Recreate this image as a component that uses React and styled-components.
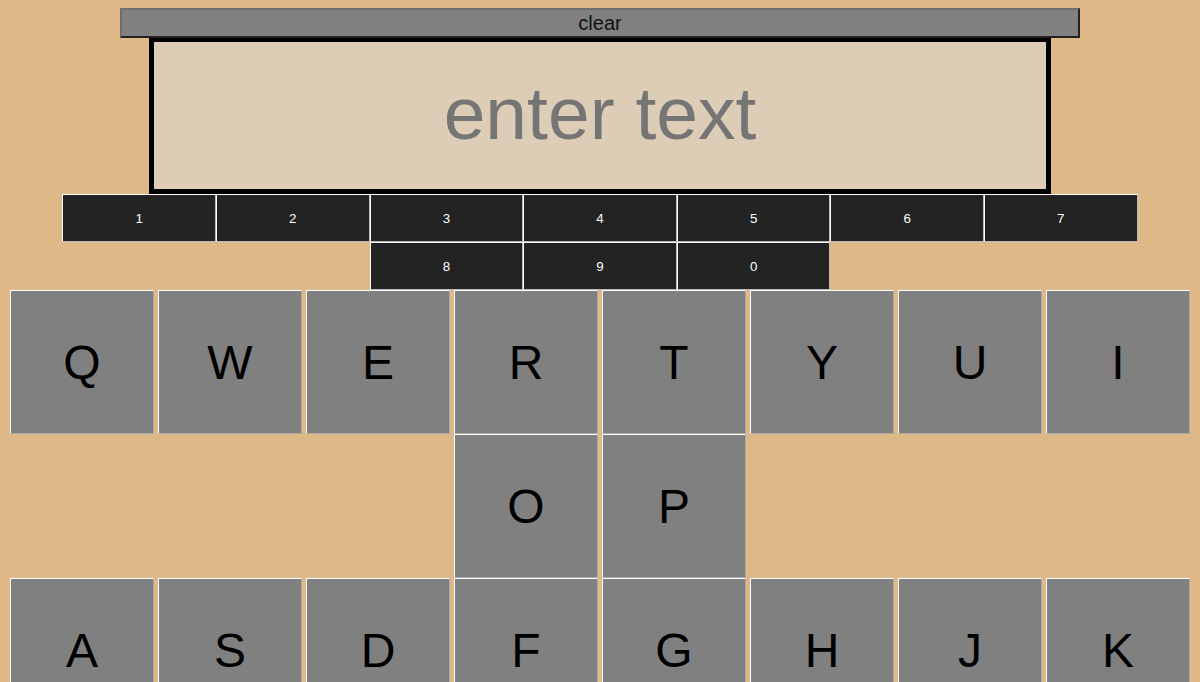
import React, { useState } from 'react'
import styled, { createGlobalStyle } from 'styled-components'

const numbers = ['1', '2', '3', '4', '5', '6', '7', '8', '9', '0']
const letterRows = [
  ['Q', 'W', 'E', 'R', 'T', 'Y', 'U', 'I', 'O', 'P'],
  ['A', 'S', 'D', 'F', 'G', 'H', 'J', 'K', 'L'],
  ['Z', 'X', 'C', 'V', 'B', 'N', 'M'],
]

export default function App() {
  const [text, setText] = useState('')

  return (
    <>
      <GlobalStyle />
      <Page>
        <ClearButton onClick={() => setText('')}>clear</ClearButton>
        <TextBox
          value={text}
          placeholder="enter text"
          onChange={e => setText(e.target.value)}
        />
        <NumberRow>
          {numbers.map(n => (
            <NumberKey key={n} onClick={() => setText(text + n)}>
              {n}
            </NumberKey>
          ))}
        </NumberRow>
        {letterRows.map((row, i) => (
          <LetterRow key={i}>
            {row.map(l => (
              <LetterKey key={l} onClick={() => setText(text + l)}>
                {l}
              </LetterKey>
            ))}
          </LetterRow>
        ))}
      </Page>
    </>
  )
}

const GlobalStyle = createGlobalStyle`
  html, body {
    overflow: hidden;
  }
  body {
    margin: 8px;
    background: #deb887;
    font-family: 'Liberation Sans', Arial, sans-serif;
  }
`

const Page = styled.div`
  display: flex;
  flex-direction: column;
  align-items: center;
`

const ClearButton = styled.button`
  box-sizing: border-box;
  width: 960px;
  height: 30px;
  padding: 0;
  background: #808080;
  color: #111;
  font-family: 'Liberation Sans', Arial, sans-serif;
  font-size: 20px;
  line-height: 26px;
  border-style: solid;
  border-width: 2px;
  border-color: #6e6e6e #222 #222 #6e6e6e;
`

const TextBox = styled.input`
  box-sizing: border-box;
  width: 902px;
  height: 156px;
  margin: 0;
  padding: 0 10px 6px;
  background: #ddccb6;
  border: 5px solid #000;
  border-top-width: 4px;
  outline: none;
  text-align: center;
  font-family: 'Liberation Sans', Arial, sans-serif;
  font-size: 75px;
  color: #222;
  &::placeholder {
    color: #757575;
  }
`

const NumberRow = styled.div`
  display: flex;
  flex-wrap: wrap;
  justify-content: center;
  width: 100%;
`

const NumberKey = styled.button`
  box-sizing: border-box;
  width: 153.6px;
  height: 48px;
  padding: 0;
  background: #232323;
  color: #fff;
  font-family: 'Liberation Sans', Arial, sans-serif;
  font-size: 13.33px;
  border-style: solid;
  border-width: 1px;
  border-color: #fff #bbb #bbb #fff;
`

const LetterRow = styled.div`
  display: flex;
  flex-wrap: wrap;
  justify-content: center;
  column-gap: 4px;
  width: 100%;
`

const LetterKey = styled.button`
  box-sizing: border-box;
  width: 144px;
  height: 144px;
  padding: 0;
  background: #808080;
  color: #000;
  font-family: 'Liberation Sans', Arial, sans-serif;
  font-size: 48px;
  border-style: solid;
  border-width: 1px;
  border-color: #fff #aaa #aaa #fff;
`
